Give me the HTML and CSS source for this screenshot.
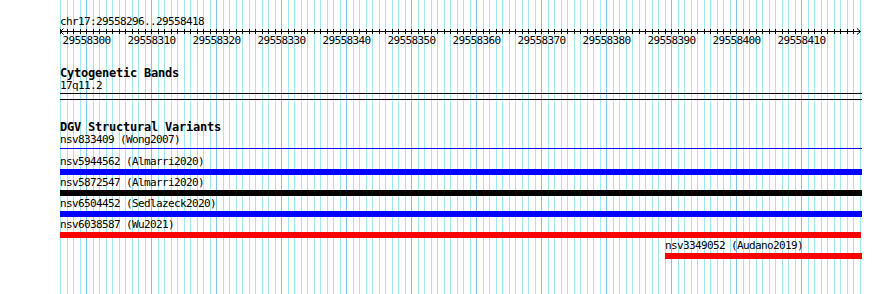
FILE: index.html
```html
<!DOCTYPE html>
<html>
<head>
    <title>chr17:29558296..29558418</title>
    <link rel="stylesheet" href="styles.css">
</head>
<body>
    <div class="panel">
        <svg class="grid" id="grid" width="890" height="294"></svg>

        <div class="ruler">
            <div class="ref">chr17:29558296..29558418</div>
            <svg class="scale" id="scale" width="802" height="6"></svg>
            <div class="scale-labels" id="labels"></div>
        </div>

        <div class="track">
            <div class="track-title">Cytogenetic Bands</div>
            <div class="feature-label">17q11.2</div>
            <div class="band"></div>
        </div>

        <div class="track">
            <div class="track-title">DGV Structural Variants</div>
            <div class="feature">
                <div class="feature-label">nsv833409 (Wong2007)</div>
                <div class="bar-slot"><div class="bar thin-blue"></div></div>
            </div>
            <div class="feature">
                <div class="feature-label">nsv5944562 (Almarri2020)</div>
                <div class="bar-slot"><div class="bar blue"></div></div>
            </div>
            <div class="feature">
                <div class="feature-label">nsv5872547 (Almarri2020)</div>
                <div class="bar-slot"><div class="bar black"></div></div>
            </div>
            <div class="feature">
                <div class="feature-label">nsv6504452 (Sedlazeck2020)</div>
                <div class="bar-slot"><div class="bar blue"></div></div>
            </div>
            <div class="feature">
                <div class="feature-label">nsv6038587 (Wu2021)</div>
                <div class="bar-slot"><div class="bar red" style="width: 801px"></div></div>
            </div>
            <div class="feature" style="margin-left: 605px">
                <div class="feature-label">nsv3349052 (Audano2019)</div>
                <div class="bar-slot"><div class="bar red" style="width: 197px"></div></div>
            </div>
        </div>
    </div>

    <script>
      let start = 29558296;
      let end = 29558418;
      let left = 60;
      let scale = 800 / (end - start + 1);
      let svgNS = "http://www.w3.org/2000/svg";

      function xPos(base) {
          return Math.round(left + (base - start) * scale);
      }

      function addLine(svg, x1, y1, x2, y2, cls) {
          let line = document.createElementNS(svgNS, "line");
          line.setAttribute("x1", x1);
          line.setAttribute("y1", y1);
          line.setAttribute("x2", x2);
          line.setAttribute("y2", y2);
          if (cls) line.setAttribute("class", cls);
          svg.appendChild(line);
      }

      // grid lines, one per base, darker every 10
      let grid = document.getElementById("grid");
      for (let b = start; b <= end + 1; b++) {
          let x = xPos(b) + 0.5;
          addLine(grid, x, 0, x, 294, b % 10 === 0 ? "major" : "minor");
      }

      // ruler
      let ruler = document.getElementById("scale");
      addLine(ruler, 0, 3.5, 800, 3.5);
      for (let b = start; b <= end; b++) {
          let x = xPos(b) - left + 0.5;
          addLine(ruler, x, 1, x, 6);
      }
      let arrows = [[3.5, 0.5], [0.5, 3.5], [3.5, 6.5], [797, 0.5], [800.5, 3.5], [797, 6.5]];
      for (let i = 0; i < 6; i += 3) {
          let p = document.createElementNS(svgNS, "polyline");
          p.setAttribute("points", arrows.slice(i, i + 3).map(a => a.join(",")).join(" "));
          ruler.appendChild(p);
      }

      let labels = document.getElementById("labels");
      for (let b = start; b <= end; b++) {
          if (b % 10 !== 0) continue;
          let span = document.createElement("span");
          span.textContent = b;
          span.style.left = (xPos(b) - left + 0.5) + "px";
          labels.appendChild(span);
      }
    </script>
</body>
</html>
```

FILE: styles.css
```css
body {
    margin: 0;
    background-color: #fff;
}
.panel {
    position: relative;
    width: 890px;
    height: 294px;
    padding: 15px 0 0 60px;
    box-sizing: border-box;
    overflow: hidden;
    font-family: "DejaVu Sans Mono", monospace;
    font-size: 11px;
    letter-spacing: -0.62px;
    color: #000;
}
.grid {
    position: absolute;
    top: 0;
    left: 0;
}
.grid line {
    stroke-width: 1;
}
.grid .minor {
    stroke: #a2e6ee;
}
.grid .major {
    stroke: #80c2ee;
}
.ruler, .track {
    position: relative;
    width: 802px;
}
.ruler {
    padding-bottom: 20px;
}
.ref {
    line-height: 13px;
    white-space: nowrap;
}
.scale {
    display: block;
    overflow: visible;
}
.scale line, .scale polyline {
    stroke: #000;
    stroke-width: 1;
    fill: none;
}
.scale-labels {
    position: relative;
    height: 13px;
    line-height: 13px;
}
.scale-labels span {
    position: absolute;
    top: 0;
    transform: translateX(-50%);
    white-space: nowrap;
}
.track + .track {
    margin-top: 21px;
}
.track-title {
    font-weight: bold;
    font-size: 12px;
    letter-spacing: -0.22px;
    line-height: 13px;
    white-space: nowrap;
}
.feature-label {
    line-height: 12px;
    white-space: nowrap;
}
.band {
    margin-top: 1px;
    height: 5px;
    border-top: 1px solid #000;
    border-bottom: 1px solid #000;
}
.feature + .feature {
    margin-top: 2px;
}
.bar-slot {
    margin-top: 1px;
    height: 6px;
}
.bar {
    width: 802px;
    height: 6px;
}
.bar.thin-blue {
    height: 1px;
    margin-top: 2px;
    background-color: #0000ff;
}
.bar.blue {
    background-color: #0000ff;
}
.bar.black {
    background-color: #000;
}
.bar.red {
    background-color: #ff0000;
}
```
